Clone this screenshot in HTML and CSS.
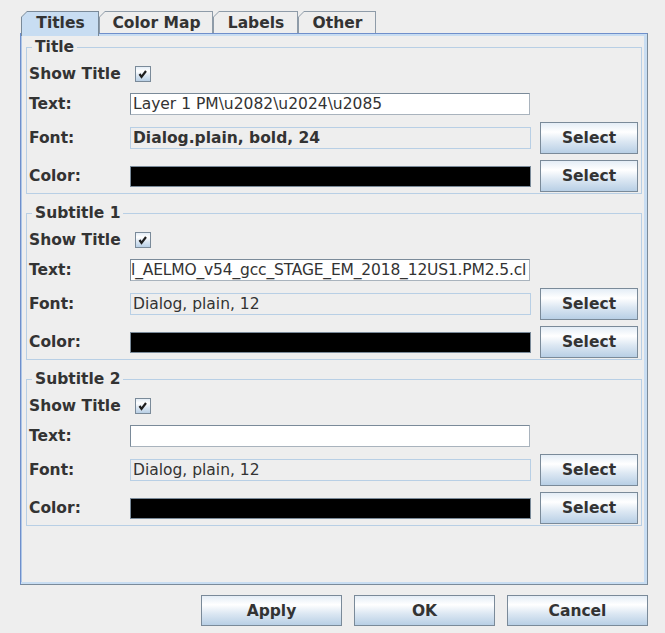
FILE: index.html
```html
<!DOCTYPE html>
<html>
<head>
<meta charset="utf-8">
<link rel="stylesheet" href="styles.css">
</head>
<body>
<div class="dialog">
  <div class="tabs">
    <div class="tab tab-selected w-titles"><div class="tab-face">Titles</div></div>
    <div class="tab w-colormap"><div class="tab-face">Color Map</div></div>
    <div class="tab w-labels"><div class="tab-face">Labels</div></div>
    <div class="tab w-other"><div class="tab-face">Other</div></div>
  </div>
  <div class="panel">
    <fieldset class="group">
      <legend class="group-title">Title</legend>
      <div class="row row-check">
        <span class="label">Show Title</span>
        <span class="check"><svg width="14" height="14" viewBox="0 0 14 14"><polyline points="3.5,7 5.5,9.8 10,4" fill="none" stroke="#1e1e1e" stroke-width="2.2"/></svg></span>
      </div>
      <div class="row row-text">
        <span class="label">Text:</span>
        <div class="field field-text">Layer 1 PM\u2082\u2024\u2085</div>
      </div>
      <div class="row row-font">
        <span class="label">Font:</span>
        <div class="field field-font bold">Dialog.plain, bold, 24</div>
        <button class="btn btn-select">Select</button>
      </div>
      <div class="row row-color">
        <span class="label">Color:</span>
        <div class="field field-color"></div>
        <button class="btn btn-select">Select</button>
      </div>
    </fieldset>
    <fieldset class="group">
      <legend class="group-title">Subtitle 1</legend>
      <div class="row row-check">
        <span class="label">Show Title</span>
        <span class="check"><svg width="14" height="14" viewBox="0 0 14 14"><polyline points="3.5,7 5.5,9.8 10,4" fill="none" stroke="#1e1e1e" stroke-width="2.2"/></svg></span>
      </div>
      <div class="row row-text">
        <span class="label">Text:</span>
        <div class="field field-text scrolled">l_AELMO_v54_gcc_STAGE_EM_2018_12US1.PM2.5.cl</div>
      </div>
      <div class="row row-font">
        <span class="label">Font:</span>
        <div class="field field-font">Dialog, plain, 12</div>
        <button class="btn btn-select">Select</button>
      </div>
      <div class="row row-color">
        <span class="label">Color:</span>
        <div class="field field-color"></div>
        <button class="btn btn-select">Select</button>
      </div>
    </fieldset>
    <fieldset class="group">
      <legend class="group-title">Subtitle 2</legend>
      <div class="row row-check">
        <span class="label">Show Title</span>
        <span class="check"><svg width="14" height="14" viewBox="0 0 14 14"><polyline points="3.5,7 5.5,9.8 10,4" fill="none" stroke="#1e1e1e" stroke-width="2.2"/></svg></span>
      </div>
      <div class="row row-text">
        <span class="label">Text:</span>
        <div class="field field-text"></div>
      </div>
      <div class="row row-font">
        <span class="label">Font:</span>
        <div class="field field-font">Dialog, plain, 12</div>
        <button class="btn btn-select">Select</button>
      </div>
      <div class="row row-color">
        <span class="label">Color:</span>
        <div class="field field-color"></div>
        <button class="btn btn-select">Select</button>
      </div>
    </fieldset>
  </div>
  <div class="actions">
    <button class="btn btn-action">Apply</button>
    <button class="btn btn-action">OK</button>
    <button class="btn btn-action">Cancel</button>
  </div>
</div>
</body>
</html>
```
FILE: styles.css
```css
html, body {
  margin: 0;
  background: #eeeeee;
}
body {
  font-family: "DejaVu Sans", sans-serif;
  font-size: 15.5px;
  line-height: 18px;
  color: #333333;
}
.dialog {
  width: 665px;
  height: 633px;
  box-sizing: border-box;
  padding: 11px 17px 0 20px;
}
.tabs {
  display: flex;
  height: 22px;
  margin-left: 1px;
  position: relative;
  z-index: 1;
}
.tab {
  height: 22px;
  box-sizing: border-box;
  padding: 1px 1px 0 1px;
  background: #8e9ba8;
  clip-path: polygon(6px 0, 100% 0, 100% 100%, 0 100%, 0 6px);
}
.tab-face {
  height: 100%;
  background: #eeeeee;
  clip-path: polygon(5px 0, 100% 0, 100% 100%, 0 100%, 0 5px);
  display: flex;
  align-items: center;
  justify-content: center;
  font-weight: bold;
  padding-left: 1px;
}
.tab-selected {
  height: 25px;
  background: #7a8a99;
}
.tab-selected .tab-face {
  background: #c8ddf2;
  padding-bottom: 3px;
  box-sizing: border-box;
}
.w-titles { width: 78px; }
.w-colormap { width: 114px; }
.w-labels { width: 85px; }
.w-other { width: 78px; }

.panel {
  height: 552px;
  box-sizing: border-box;
  border: 1px solid;
  border-color: #6f8fcb #7a8a99 #7a8a99 #6f8fcb;
  box-shadow: inset 0 2px #c8ddf2, inset -3px 0 #c8ddf2, inset 0 -2px #c8ddf2, inset 1px 0 #aec6e6;
  padding: 4px 5px 0 5px;
}
.group {
  margin: 0 0 10px 0;
  padding: 6px 2px 1px 2px;
  border: 1px solid #b8cfe5;
  min-width: 0;
}
.group-title {
  margin-left: 3px;
  padding: 0 3px;
  font-weight: bold;
  line-height: 18px;
}
.row {
  display: grid;
  grid-template-columns: 101px 401px 107px;
  align-items: center;
}
.row-check { height: 24px; }
.row-text { height: 36px; }
.row-font { height: 32px; }
.row-color { height: 32px; padding-top: 6px; }
.label {
  font-weight: bold;
  white-space: nowrap;
}
.bold { font-weight: bold; }
.check {
  width: 16px;
  height: 16px;
  margin-left: 5px;
  box-sizing: border-box;
  border: 1px solid #7a8a99;
  background: linear-gradient(#e4edf6 0%, #ffffff 30%, #dde8f3 60%, #b8cfe5 100%);
  display: flex;
  align-items: center;
  justify-content: center;
}
.check svg { display: block; }
.field {
  height: 22px;
  box-sizing: border-box;
  padding: 0 2px;
  display: flex;
  align-items: center;
  white-space: nowrap;
  overflow: hidden;
}
.field-text {
  width: 400px;
  background: #ffffff;
  border: 1px solid #a9b3bd;
  border-top-color: #7a8a99;
  border-left-color: #7a8a99;
}
.scrolled {
  padding-left: 0;
  letter-spacing: -0.17px;
}
.field-font {
  background: #eeeeee;
  border: 1px solid #b8cfe5;
}
.field-color {
  height: 21px;
  background: #000000;
  border: 1px solid #7a8a99;
}
.btn {
  height: 32px;
  box-sizing: border-box;
  margin: 0;
  padding: 0;
  border: 1px solid #7a8a99;
  background: linear-gradient(#e4edf6 0%, #ffffff 30%, #dde8f3 60%, #b8cfe5 100%);
  font-family: "DejaVu Sans", sans-serif;
  font-size: 15.5px;
  font-weight: bold;
  line-height: 18px;
  color: #333333;
}
.btn-select {
  width: 98px;
  justify-self: end;
}
.actions {
  display: flex;
  justify-content: flex-end;
  gap: 12px;
  margin-top: 10px;
}
.btn-action {
  width: 141px;
  height: 31px;
}
```
